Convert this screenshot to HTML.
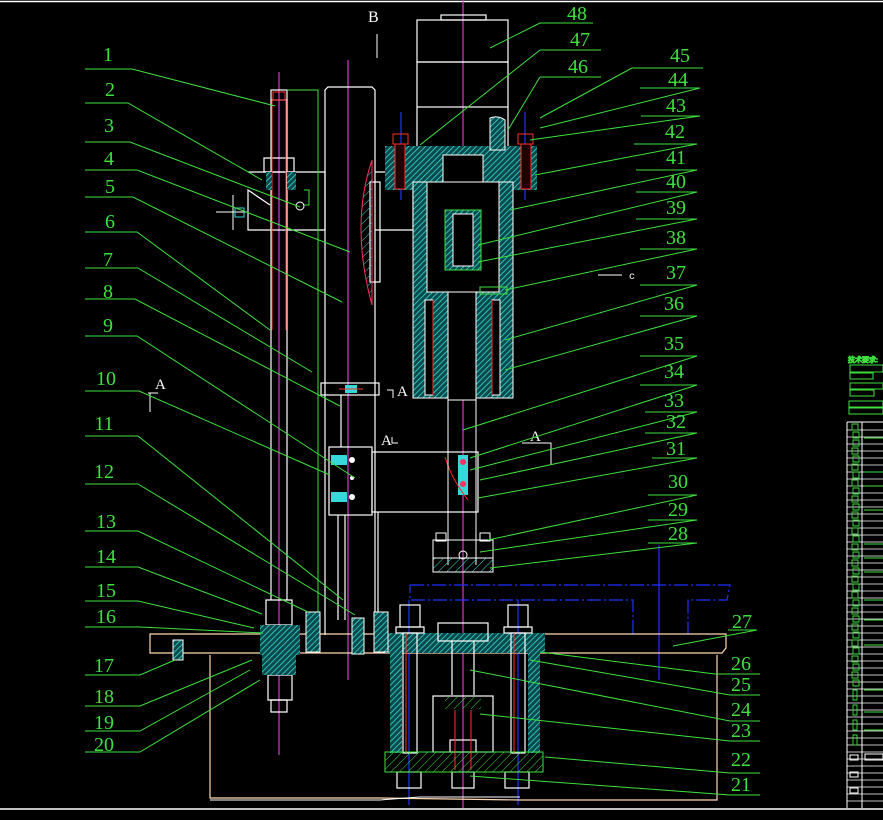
<!DOCTYPE html>
<html><head><meta charset="utf-8"><style>
html,body{margin:0;padding:0;background:#000;}
svg{display:block;}
text{font-family:"Liberation Serif",serif;fill:#3ee03e;font-size:20px;}
</style></head><body>
<svg width="883" height="820" viewBox="0 0 883 820" xmlns="http://www.w3.org/2000/svg">
<defs>
<pattern id="h" width="4" height="4" patternUnits="userSpaceOnUse" patternTransform="rotate(45)">
<rect width="4" height="4" fill="#0a4a4a"/><line x1="0" y1="0" x2="0" y2="4" stroke="#36d8d8" stroke-width="1.6"/></pattern>
<pattern id="g" width="6" height="6" patternUnits="userSpaceOnUse" patternTransform="rotate(45)">
<line x1="0" y1="0" x2="0" y2="6" stroke="#3ee03e" stroke-width="1"/></pattern>
<pattern id="c" width="6" height="6" patternUnits="userSpaceOnUse" patternTransform="rotate(45)">
<line x1="0" y1="0" x2="0" y2="6" stroke="#36d8d8" stroke-width="1"/></pattern>
</defs>
<rect width="883" height="820" fill="#000"/>
<!-- border -->
<line x1="0" y1="1.5" x2="883" y2="1.5" stroke="#fff" stroke-width="1.5"/>
<line x1="0" y1="809" x2="883" y2="809" stroke="#fff" stroke-width="1.5"/>

<!-- right title block -->
<g stroke="#3ee03e" fill="none" stroke-width="1">
<text x="848" y="362" style="font-size:7px">技术要求:</text>
<rect x="850" y="365" width="33" height="7"/><rect x="850" y="373" width="23" height="6"/>
<rect x="850" y="383" width="33" height="6"/><rect x="850" y="390" width="24" height="6"/>
<rect x="849" y="401" width="34" height="6"/><rect x="849" y="408" width="34" height="6"/>
</g>
<g stroke="#fff" stroke-width="1">
<line x1="847" y1="422" x2="847" y2="808"/><line x1="862" y1="422" x2="862" y2="808"/>
<line x1="847" y1="422" x2="883" y2="422"/>
</g>
<g stroke="#fff" stroke-width="0.8">
<path d="M847 430H883M847 437H883M847 444H883M847 451H883M847 458H883M847 465H883M847 472H883M847 479H883M847 486H883M847 493H883M847 500H883M847 507H883M847 514H883M847 521H883M847 528H883M847 535H883M847 542H883M847 549H883M847 556H883M847 563H883M847 570H883M847 577H883M847 584H883M847 591H883M847 598H883M847 605H883M847 612H883M847 619H883M847 626H883M847 633H883M847 640H883M847 647H883M847 654H883M847 661H883M847 668H883M847 675H883M847 682H883M847 689H883M847 696H883M847 703H883M847 710H883M847 717H883M847 724H883M847 731H883M847 738H883M847 745H883M847 752H883M847 759H883M847 766H883M847 773H883M847 780H883M847 787H883M847 794H883M847 801H883"/>
</g>
<g stroke="#3ee03e" fill="none" stroke-width="0.9">
<path d="M852 424h6v6h-6zM853 432h6v6h-6zM853 440h6v6h-6zM852 448h6v6h-6zM853 456h6v6h-6zM852 464h6v6h-6zM853 472h6v6h-6zM852 480h6v6h-6zM853 488h6v6h-6zM852 496h6v6h-6zM853 504h6v6h-6zM852 512h6v6h-6zM853 520h6v6h-6zM852 528h6v6h-6zM853 536h6v6h-6zM852 544h6v6h-6zM853 552h6v6h-6zM852 560h6v6h-6zM853 568h6v6h-6zM852 576h6v6h-6zM853 584h6v6h-6zM852 592h6v6h-6zM853 600h6v6h-6zM852 608h6v6h-6zM853 616h6v6h-6zM852 624h6v6h-6zM853 632h6v6h-6zM852 640h6v6h-6zM853 648h6v6h-6zM852 656h6v6h-6zM853 664h6v6h-6zM852 672h6v6h-6zM853 680h6v6h-6zM853 690h4v10h-4zM853 705h4v10h-4zM853 720h4v10h-4zM853 735h4v10h-4z"/>
<path d="M864 438h19M864 472h19M864 486h19M864 510h19M864 544h19M864 558h19M864 572h19M864 600h19M864 620h19M864 645h19M864 690h19M864 712h19M864 730h19"/>
</g>
<g stroke="#fff" fill="none"><rect x="850" y="755" width="8" height="5"/><rect x="850" y="772" width="8" height="5"/><rect x="850" y="788" width="8" height="5"/><rect x="865" y="754" width="18" height="6"/></g>

<!-- centerlines -->
<g stroke="#d040d0" stroke-width="1.2">
<line x1="463" y1="0" x2="463" y2="808"/>
<line x1="348" y1="60" x2="348" y2="680"/>
<line x1="279" y1="72" x2="279" y2="755"/>
</g>
<g stroke="#2030ff" stroke-width="1.2">
<line x1="409" y1="600" x2="409" y2="805"/>
<line x1="518" y1="600" x2="518" y2="805"/>
<line x1="659" y1="545" x2="659" y2="680"/>
<line x1="401" y1="112" x2="401" y2="200"/><line x1="525" y1="112" x2="525" y2="200"/>
<path d="M410 585H730L727 600H688V634M633 634V600H410V585" fill="none" stroke-dasharray="14 3 2 3"/>
</g>

<!-- base plate & frame -->
<g stroke="#ffd8b0" fill="none" stroke-width="1.2">
<path d="M150 634H726V648L722 653H150Z"/>
<path d="M210 655V798H380L520 800H717V655"/>
</g>
<path d="M210 800H380M380 800L420 797H520" stroke="#fff" fill="none"/>

<!-- left rod -->
<g stroke="#fff" fill="none" stroke-width="1.2">
<rect x="271" y="90" width="16" height="10"/>
<line x1="271" y1="100" x2="271" y2="600"/><line x1="287" y1="100" x2="287" y2="600"/>
<path d="M264 158H294V172H264Z"/>
<path d="M248 172H325V230H248V190L270 205"/>
<path d="M266 600H292V625H266Z"/>
<path d="M268 675H292V700H268Z"/><path d="M271 700H287V712H271Z"/>
</g>
<rect x="273" y="92" width="12" height="8" fill="none" stroke="#ff3030"/>
<line x1="272" y1="100" x2="272" y2="330" stroke="#ff3030"/><line x1="286" y1="100" x2="286" y2="330" stroke="#ff3030"/>
<rect x="266" y="172" width="6" height="18" fill="url(#h)"/><rect x="287" y="172" width="9" height="18" fill="url(#h)"/>
<rect x="260" y="625" width="40" height="30" fill="url(#h)"/>
<rect x="262" y="655" width="34" height="20" fill="url(#h)"/>
<path d="M216 212H247M233 195V230" stroke="#fff"/><rect x="235" y="208" width="9" height="9" fill="none" stroke="#36d8d8"/>
<circle cx="300" cy="206" r="4" fill="none" stroke="#fff"/>
<path d="M304 190h5v15h-5" stroke="#3ee03e" fill="none"/>
<!-- green guide line -->
<path d="M287 90H318V635" stroke="#3ee03e" fill="none"/>

<!-- column -->
<g stroke="#fff" fill="none" stroke-width="1.2">
<path d="M325 635V90L328 87H372L375 90V635"/>
<rect x="370" y="182" width="10" height="100"/>
<path d="M375 172H413V230H375"/>
<rect x="321" y="383" width="58" height="12"/>
<rect x="329" y="447" width="43" height="68"/>
<rect x="372" y="452" width="106" height="60"/>
<line x1="341" y1="395" x2="341" y2="447"/><line x1="338" y1="515" x2="338" y2="620"/><line x1="345" y1="515" x2="345" y2="620"/>
<line x1="378" y1="512" x2="378" y2="620"/>
</g>
<path d="M372 160Q350 225 372 305Z" fill="url(#c)" stroke="#ff3060"/>
<rect x="345" y="385" width="12" height="8" fill="#36d8d8"/><line x1="339" y1="389" x2="363" y2="389" stroke="#ff3030"/>
<rect x="331" y="455" width="16" height="10" fill="#36d8d8"/><rect x="331" y="492" width="16" height="10" fill="#36d8d8"/>
<circle cx="352" cy="460" r="3" fill="#fff"/><circle cx="352" cy="497" r="3" fill="#fff"/><circle cx="352" cy="478" r="2" fill="#fff"/>
<rect x="458" y="455" width="10" height="40" fill="#36d8d8"/><circle cx="463" cy="462" r="3" fill="#ff3060"/><circle cx="463" cy="484" r="3" fill="#ff3060"/>
<path d="M445 457Q452 480 468 500" stroke="#ff2020" fill="none"/>
<!-- A labels -->
<g fill="#fff" style="font-size:16px"><text x="368" y="22" style="fill:#fff;font-size:16px">B</text>
<text x="397" y="396" style="fill:#fff;font-size:15px">A</text><text x="381" y="445" style="fill:#fff;font-size:15px">A</text>
<text x="155" y="389" style="fill:#fff;font-size:15px">A</text><text x="530" y="441" style="fill:#fff;font-size:15px">A</text>
<text x="629" y="279" style="fill:#fff;font-size:10px;font-family:'Liberation Mono',monospace">c</text></g>
<g stroke="#fff" fill="none"><path d="M377 34V58"/><path d="M387 390h6v8M392 437v6h6M148 393H158M150 393V412M522 443H551V465M598 275H622"/></g>

<!-- motor -->
<g stroke="#fff" fill="none" stroke-width="1.2">
<rect x="441" y="15" width="45" height="5"/>
<rect x="417" y="20" width="91" height="42"/>
<rect x="417" y="62" width="91" height="45"/>
<path d="M417 107V150M508 107V150"/>
</g>
<!-- flange -->
<rect x="385" y="146" width="152" height="44" fill="url(#h)"/>
<rect x="443" y="155" width="40" height="30" fill="#000" stroke="#fff"/>
<rect x="393" y="134" width="15" height="10" fill="none" stroke="#ff3030"/>
<rect x="518" y="134" width="15" height="10" fill="none" stroke="#ff3030"/>
<rect x="395" y="144" width="10" height="45" fill="#200" stroke="#ff3030"/>
<rect x="521" y="144" width="10" height="45" fill="#200" stroke="#ff3030"/>
<path d="M490 150V118Q498 115 505 120V150Z" fill="url(#h)" stroke="#fff"/>
<!-- cylinder housing -->
<rect x="413" y="182" width="100" height="216" fill="url(#h)" stroke="#fff"/>
<rect x="427" y="182" width="72" height="110" fill="#000" stroke="#fff"/>
<rect x="445" y="210" width="36" height="60" fill="url(#h)" stroke="#3ee03e"/>
<rect x="453" y="214" width="20" height="52" fill="#000" stroke="#fff"/>
<rect x="448" y="292" width="28" height="108" fill="#000" stroke="#fff"/>
<rect x="425" y="300" width="8" height="95" fill="#000" stroke="#fff"/>
<rect x="492" y="300" width="8" height="95" fill="#000" stroke="#fff"/>
<line x1="433" y1="300" x2="433" y2="395" stroke="#ff3030"/><line x1="492" y1="300" x2="492" y2="395" stroke="#ff3030"/>
<rect x="480" y="287" width="27" height="7" fill="none" stroke="#3ee03e"/>
<path d="M448 398V565M476 398V565" stroke="#fff"/>
<!-- clamp bottom -->
<g stroke="#fff" fill="none"><rect x="433" y="540" width="60" height="18"/><rect x="436" y="533" width="10" height="8"/><rect x="480" y="533" width="10" height="8"/></g>
<rect x="433" y="558" width="60" height="14" fill="url(#c)" stroke="#fff"/>
<circle cx="463" cy="555" r="4" fill="none" stroke="#fff"/>

<!-- lower assembly -->
<rect x="385" y="633" width="160" height="20" fill="url(#h)"/>
<rect x="390" y="653" width="12" height="100" fill="url(#h)"/><rect x="528" y="653" width="12" height="100" fill="url(#h)"/>
<g stroke="#fff" fill="none" stroke-width="1.2">
<rect x="400" y="605" width="20" height="22"/><rect x="396" y="627" width="28" height="6"/>
<rect x="403" y="633" width="14" height="120"/>
<rect x="508" y="605" width="20" height="22"/><rect x="504" y="627" width="28" height="6"/>
<rect x="511" y="633" width="14" height="120"/>
<rect x="438" y="623" width="50" height="18"/>
<path d="M452 641V695M474 641V695"/>
<rect x="433" y="696" width="60" height="56"/>
<rect x="397" y="772" width="24" height="16"/><rect x="505" y="772" width="24" height="16"/><rect x="452" y="772" width="22" height="16"/>
<rect x="450" y="740" width="26" height="12"/>
</g>
<rect x="445" y="697" width="36" height="12" fill="url(#g)"/>
<line x1="406" y1="633" x2="406" y2="753" stroke="#ff3030"/><line x1="514" y1="633" x2="514" y2="753" stroke="#ff3030"/>
<line x1="455" y1="710" x2="455" y2="770" stroke="#ff3030"/><line x1="471" y1="710" x2="471" y2="770" stroke="#ff3030"/>
<rect x="385" y="752" width="158" height="20" fill="url(#g)" stroke="#3ee03e"/>
<!-- small bolts on plate -->
<rect x="306" y="612" width="14" height="40" fill="url(#h)" stroke="#fff"/>
<rect x="374" y="612" width="14" height="40" fill="url(#h)" stroke="#fff"/>
<rect x="352" y="618" width="12" height="36" fill="url(#h)" stroke="#fff"/>
<rect x="173" y="640" width="10" height="20" fill="url(#h)" stroke="#fff"/>

<!-- leaders -->
<g stroke="#3ee03e" fill="none" stroke-width="1">
<path d="M85 69H132L275 106"/>
<path d="M85 103H128L262 180"/>
<path d="M85 142H130L300 207"/>
<path d="M85 170H137L350 252"/>
<path d="M85 197H133L342 302"/>
<path d="M85 232H137L270 330"/>
<path d="M85 268H138L312 372"/>
<path d="M85 299H135L340 406"/>
<path d="M85 336H137L355 478"/>
<path d="M85 391H139L330 475"/>
<path d="M85 436H138L343 600"/>
<path d="M85 484H138L355 615"/>
<path d="M85 531H138L308 612"/>
<path d="M85 567H138L262 614"/>
<path d="M85 601H138L254 628"/>
<path d="M85 627H140L263 633"/>
<path d="M85 675H140L175 660"/>
<path d="M85 706H140L252 660"/>
<path d="M85 731H140L250 670"/>
<path d="M85 752H140L260 680"/>
<path d="M540 23H593M540 23L490 48"/>
<path d="M540 50H601M540 50L420 145"/>
<path d="M540 77H601M540 77L508 130"/>
<path d="M632 68H703M632 68L540 118"/>
<path d="M640 88H700L540 128"/>
<path d="M641 116H700L530 140"/>
<path d="M634 144H697L535 175"/>
<path d="M636 170H697L510 210"/>
<path d="M636 192H697L478 245"/>
<path d="M636 219H697L478 262"/>
<path d="M640 249H697L505 290"/>
<path d="M640 285H697L505 340"/>
<path d="M640 316H697L505 370"/>
<path d="M640 356H697L463 430"/>
<path d="M640 385H697L470 458"/>
<path d="M645 412H697L470 470"/>
<path d="M645 433H697L480 480"/>
<path d="M652 458H697L478 498"/>
<path d="M648 495H697L488 540"/>
<path d="M648 520H697L480 552"/>
<path d="M648 543H697L490 568"/>
<path d="M728 630H757L673 646"/>
<path d="M760 674H715L540 652"/>
<path d="M760 695H730L530 660"/>
<path d="M760 721H730L470 670"/>
<path d="M760 741H730L480 714"/>
<path d="M760 773H730L545 757"/>
<path d="M760 795H730L470 776"/>
</g>

<!-- numbers -->
<g text-anchor="middle">
<text x="108" y="61">1</text><text x="110" y="96">2</text><text x="109" y="132">3</text><text x="109" y="165">4</text><text x="110" y="193">5</text><text x="110" y="228">6</text><text x="108" y="266">7</text><text x="108" y="298">8</text><text x="108" y="332">9</text><text x="106" y="385">10</text><text x="104" y="430">11</text><text x="104" y="478">12</text><text x="106" y="528">13</text><text x="106" y="563">14</text><text x="106" y="597">15</text><text x="106" y="623">16</text><text x="104" y="672">17</text><text x="104" y="703">18</text><text x="104" y="729">19</text><text x="104" y="751">20</text>
<text x="577" y="20">48</text><text x="580" y="46">47</text><text x="578" y="73">46</text>
<text x="680" y="62">45</text><text x="678" y="86">44</text><text x="676" y="112">43</text><text x="675" y="138">42</text><text x="676" y="164">41</text><text x="676" y="188">40</text><text x="676" y="214">39</text><text x="676" y="244">38</text><text x="676" y="279">37</text><text x="674" y="310">36</text><text x="674" y="350">35</text><text x="674" y="378">34</text><text x="674" y="407">33</text><text x="676" y="428">32</text><text x="676" y="455">31</text><text x="678" y="488">30</text><text x="678" y="516">29</text><text x="678" y="540">28</text>
<text x="742" y="628">27</text><text x="741" y="670">26</text><text x="741" y="691">25</text><text x="741" y="716">24</text><text x="741" y="737">23</text><text x="741" y="766">22</text><text x="741" y="791">21</text>
</g>
</svg>
</body></html>
